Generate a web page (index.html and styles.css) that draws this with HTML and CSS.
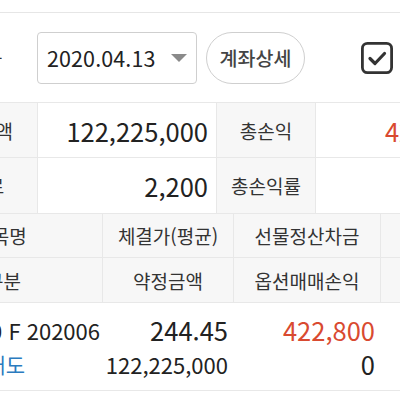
FILE: index.html
```html
<!DOCTYPE html>
<html lang="ko">
<head>
<meta charset="utf-8">
<title>계좌상세</title>
<link rel="stylesheet" href="styles.css">
</head>
<body>
<div class="page">
  <div class="topgap"></div>
  <div class="controls">
    <div class="ctl-label">조회일자</div>
    <div class="date-box">
      <span class="date-text">2020.04.13</span>
      <svg class="caret" width="16" height="8" viewBox="0 0 16 8"><polygon points="0,0 16,0 8,8" fill="#8a8a8a"/></svg>
    </div>
    <button class="pill">계좌상세</button>
    <svg class="check" width="32" height="32" viewBox="0 0 32 32">
      <rect x="1.4" y="1.4" width="29.2" height="29.2" rx="5" fill="none" stroke="#333" stroke-width="2.8"/>
      <path d="M9 16.5 L14 21.5 L23.5 11.5" fill="none" stroke="#333" stroke-width="3.2" stroke-linecap="round" stroke-linejoin="round"/>
    </svg>
  </div>

  <div class="summary">
    <div class="lbl first">약정금액</div>
    <div class="val">122,225,000</div>
    <div class="lbl">총손익</div>
    <div class="val red">422,800</div>
    <div class="lbl first">수수료</div>
    <div class="val">2,200</div>
    <div class="lbl">총손익률</div>
    <div class="val red">0.35%</div>
  </div>

  <div class="dhead">
    <div class="hc first">종목명</div>
    <div class="hc">체결가(평균)</div>
    <div class="hc">선물정산차금</div>
    <div class="hc"></div>
    <div class="hc first alt">구분</div>
    <div class="hc">약정금액</div>
    <div class="hc">옵션매매손익</div>
    <div class="hc"></div>
  </div>

  <div class="drow">
    <div class="dc name">
      <span class="code">KOSPI200 F 202006</span>
      <span class="side">신규매도</span>
    </div>
    <div class="dc num">
      <span class="big">244.45</span>
      <span class="small">122,225,000</span>
    </div>
    <div class="dc num">
      <span class="big red">422,800</span>
      <span class="big">0</span>
    </div>
    <div class="dc"></div>
  </div>
</div>
</body>
</html>
```
FILE: styles.css
```css
html, body {
  margin: 0;
  padding: 0;
  background: #ffffff;
  overflow: hidden;
}
body {
  font-family: "Noto Sans CJK KR", "Noto Sans", sans-serif;
  color: #222;
  width: 400px;
  height: 400px;
}
.page {
  margin-left: -75px;
  width: 560px;
}
.topgap {
  height: 12px;
}
.controls {
  height: 89px;
  border-top: 1px solid #e6e6e6;
  display: flex;
  align-items: center;
}
.ctl-label {
  width: 77px;
  flex: none;
  text-align: right;
  font-size: 18px;
  color: #333;
  white-space: nowrap;
  overflow: hidden;
}
.date-box {
  margin-left: 35px;
  width: 160px;
  height: 52px;
  flex: none;
  box-sizing: border-box;
  border: 1px solid #cfcfcf;
  border-radius: 4px;
  display: flex;
  align-items: center;
  justify-content: space-between;
  padding: 0 9px 0 9px;
}
.date-text {
  font-size: 21.5px;
  color: #222;
  letter-spacing: 0.1px;
}
.caret {
  display: block;
}
.pill {
  margin-left: 9px;
  width: 99px;
  height: 52px;
  flex: none;
  box-sizing: border-box;
  border: 1.5px solid #cfcfcf;
  border-radius: 26px;
  background: #fff;
  font-family: inherit;
  font-size: 19.5px;
  font-weight: 500;
  color: #444;
  padding: 0;
  white-space: nowrap;
}
.check {
  margin-left: 56px;
  display: block;
  flex: none;
}

.summary {
  display: grid;
  grid-template-columns: 112px 178px 98px 1fr;
  grid-template-rows: 54px 55px;
  gap: 1px;
  background: #e8e8e8;
  border-top: 1px solid #e8e8e8;
  border-bottom: 1px solid #e8e8e8;
}
.lbl {
  background: #f7f7f7;
  display: flex;
  align-items: center;
  justify-content: center;
  font-size: 19px;
  color: #333;
  white-space: nowrap;
}
.lbl.first {
  padding-right: 6px;
}
.val {
  background: #ffffff;
  display: flex;
  align-items: center;
  justify-content: flex-end;
  padding-right: 8px;
  font-size: 25.5px;
  color: #222;
}
.red {
  color: #d94a30;
}

.dhead {
  display: grid;
  grid-template-columns: 177px 130px 146px 1fr;
  grid-template-rows: 43px 44px;
  gap: 1px;
  background: #e8e8e8;
  border-bottom: 1px solid #e8e8e8;
}
.hc {
  background: #f7f7f7;
  display: flex;
  align-items: center;
  justify-content: center;
  font-size: 19px;
  color: #333;
  white-space: nowrap;
}
.hc.first {
  padding-right: 26px;
}
.hc.first.alt {
  padding-right: 20px;
}

.drow {
  display: grid;
  grid-template-columns: 178px 131px 147px 1fr;
  height: 87px;
  border-bottom: 1px solid #e8e8e8;
}
.dc {
  display: flex;
  flex-direction: column;
  justify-content: center;
  gap: 4px;
}
.dc.name {
  align-items: flex-end;
}
.dc.num {
  align-items: flex-end;
  padding-right: 6px;
}
.code {
  font-size: 22px;
  line-height: 30px;
  white-space: nowrap;
  color: #222;
  margin-right: 3px;
}
.side {
  font-size: 21px;
  line-height: 30px;
  color: #2b7bbf;
  white-space: nowrap;
  margin-right: 78px;
}
.big {
  font-size: 25.5px;
  line-height: 30px;
}
.small {
  font-size: 22px;
  line-height: 30px;
}
```
